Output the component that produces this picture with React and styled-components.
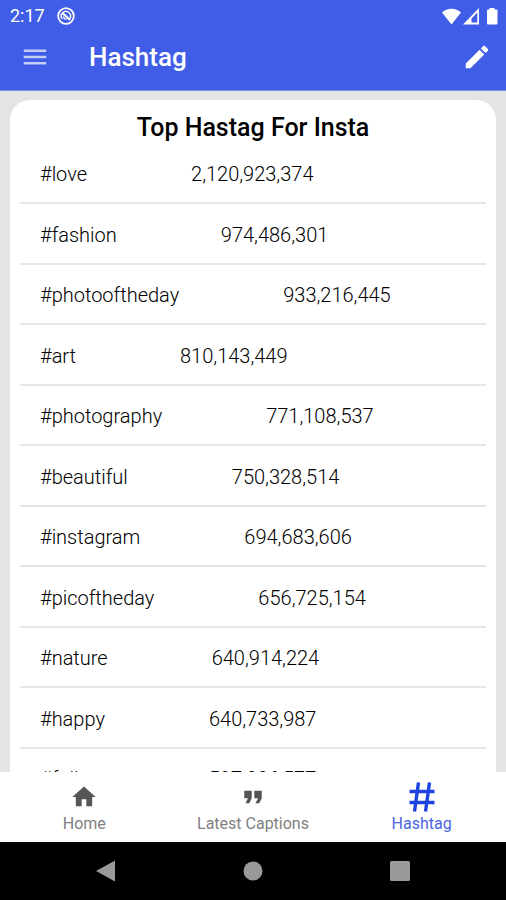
import React from 'react';
import styled, { createGlobalStyle } from 'styled-components';
import { MdMenu, MdEdit, MdHome, MdFormatQuote } from 'react-icons/md';

const GlobalStyle = createGlobalStyle`
  * {
    box-sizing: border-box;
  }

  body {
    margin: 0;
    font-family: Roboto, sans-serif;
    background: #e4e4e4;
  }
`;

const Screen = styled.div`
  display: flex;
  flex-direction: column;
  height: 100vh;
  overflow: hidden;
`;

const Header = styled.header`
  background: #3f5de6;
  border-bottom: 1px solid #7c8eea;
  color: #fff;
`;

const StatusBar = styled.div`
  display: flex;
  align-items: center;
  justify-content: space-between;
  height: 32px;
  padding: 0 8px 0 10px;
`;

const StatusGroup = styled.div`
  display: flex;
  align-items: center;
  gap: ${(props) => props.$gap};
`;

const Clock = styled.span`
  font-size: 18px;
  line-height: 20px;
`;

const Toolbar = styled.div`
  display: flex;
  align-items: center;
  height: 58px;
  padding: 0 14px 8px 20px;
`;

const IconButton = styled.button`
  display: flex;
  padding: 0;
  border: none;
  background: none;
  color: ${(props) => props.$color};
  cursor: pointer;
`;

const Title = styled.h1`
  flex: 1;
  margin: 0 0 0 39px;
  font-size: 26px;
  line-height: 32px;
  font-weight: 500;
`;

const Content = styled.main`
  flex: 1;
  min-height: 0;
  overflow: hidden;
  padding: 9px 10px 0;
`;

const Card = styled.section`
  padding: 12px 10px 0;
  border-radius: 20px;
  background: #fff;
`;

const CardTitle = styled.h2`
  margin: 0;
  font-size: 25px;
  line-height: 32px;
  font-weight: 500;
  text-align: center;
  color: #000;
`;

const HashtagList = styled.ul`
  margin: 0;
  padding: 0;
  list-style: none;
`;

const HashtagRow = styled.li`
  display: flex;
  align-items: center;
  gap: 104px;
  height: 60px;
  padding: 2px 20px 0;
  border-bottom: 2px solid #e6e6e6;
  font-size: 20px;
  font-weight: 300;
  color: #000;

  &:nth-child(even) {
    height: 61px;
  }
`;

const BottomNav = styled.nav`
  display: grid;
  grid-template-columns: repeat(3, 1fr);
  height: 70px;
  background: #fff;
`;

const NavItem = styled.a`
  display: flex;
  flex-direction: column;
  align-items: center;
  color: ${(props) => (props.$active ? '#4a66e2' : '#808080')};
  font-size: 16px;
  line-height: 20px;
  text-decoration: none;
`;

const NavIcon = styled.span`
  display: flex;
  align-items: center;
  height: 42px;
  padding-top: 8px;
  color: ${(props) => (props.$active ? '#1f43e0' : '#555')};
`;

const SystemBar = styled.div`
  display: flex;
  align-items: center;
  justify-content: space-between;
  height: 58px;
  padding: 0 96px;
  background: #000;
`;

const hashtags = [
  { tag: '#love', count: '2,120,923,374' },
  { tag: '#fashion', count: '974,486,301' },
  { tag: '#photooftheday', count: '933,216,445' },
  { tag: '#art', count: '810,143,449' },
  { tag: '#photography', count: '771,108,537' },
  { tag: '#beautiful', count: '750,328,514' },
  { tag: '#instagram', count: '694,683,606' },
  { tag: '#picoftheday', count: '656,725,154' },
  { tag: '#nature', count: '640,914,224' },
  { tag: '#happy', count: '640,733,987' },
  { tag: '#follow', count: '597,006,577' },
];

const HashIcon = () => (
  <svg width="26" height="30" viewBox="0 0 26 30" fill="none" stroke="currentColor" strokeWidth="3.4">
    <path d="M9.5 0.5L5.5 29.5M20.5 0.5L16.5 29.5M0.5 9.5H25.5M0.5 20.5H25.5" />
  </svg>
);

const tabs = [
  { label: 'Home', icon: <MdHome size={28} /> },
  { label: 'Latest Captions', icon: <MdFormatQuote size={30} /> },
  { label: 'Hashtag', icon: <HashIcon />, active: true },
];

const App = () => {
  return (
    <>
      <GlobalStyle />
      <Screen>
        <Header>
          <StatusBar>
            <StatusGroup $gap="12px">
              <Clock>2:17</Clock>
              <svg width="18" height="18" viewBox="0 0 18 18" fill="none" stroke="#fff">
                <circle cx="9" cy="9" r="7.8" strokeWidth="1.8" />
                <path d="M5.2 11.8A4.6 4.6 0 1 1 12.500 12" strokeWidth="1.4" />
                <path d="M6 6.500L13 13" strokeWidth="2.2" />
                <path d="M6.500 9.500A2.600 2.600 0 0 0 9.500 12" strokeWidth="1.3" />
              </svg>
            </StatusGroup>
            <StatusGroup $gap="2px">
              <svg width="19" height="17" viewBox="0 0 19 17" fill="#fff">
                <path d="M0 4.5C5.5-.5 13.5-.5 19 4.5L9.5 16.5Z" />
              </svg>
              <svg width="16" height="17" viewBox="0 0 16 17" fill="#fff">
                <path fillRule="evenodd" d="M16 0V16.5H0ZM14.3 4.5L8.5 10.500V14.5H14.3Z" />
              </svg>
              <svg width="17" height="17" viewBox="0 0 17 17" fill="#fff">
                <path d="M8.5 0H13.5V1.5H15.5Q16.5 1.5 16.5 2.5V15.5Q16.5 16.5 15.5 16.5H7Q6 16.5 6 15.5V2.5Q6 1.5 7 1.5H8.5Z" />
              </svg>
            </StatusGroup>
          </StatusBar>
          <Toolbar>
            <IconButton type="button" aria-label="Menu" $color="#c3cdf8">
              <MdMenu size={30} />
            </IconButton>
            <Title>Hashtag</Title>
            <IconButton type="button" aria-label="Edit" $color="#fff">
              <MdEdit size={30} />
            </IconButton>
          </Toolbar>
        </Header>
        <Content>
          <Card>
            <CardTitle>Top Hastag For Insta</CardTitle>
            <HashtagList>
              {hashtags.map((item) => (
                <HashtagRow key={item.tag}>
                  <span>{item.tag}</span>
                  <span>{item.count}</span>
                </HashtagRow>
              ))}
            </HashtagList>
          </Card>
        </Content>
        <BottomNav>
          {tabs.map((tab) => (
            <NavItem key={tab.label} href="#" $active={tab.active}>
              <NavIcon $active={tab.active}>{tab.icon}</NavIcon>
              {tab.label}
            </NavItem>
          ))}
        </BottomNav>
        <SystemBar>
          <svg width="20" height="22" viewBox="0 0 20 22" fill="#999">
            <path d="M0 11L19 0.5V21.5Z" />
          </svg>
          <svg width="20" height="20" viewBox="0 0 20 20" fill="#999">
            <circle cx="10" cy="10" r="9.5" />
          </svg>
          <svg width="20" height="20" viewBox="0 0 20 20" fill="#999">
            <rect width="20" height="20" rx="1.5" />
          </svg>
        </SystemBar>
      </Screen>
    </>
  );
};

export default App;
